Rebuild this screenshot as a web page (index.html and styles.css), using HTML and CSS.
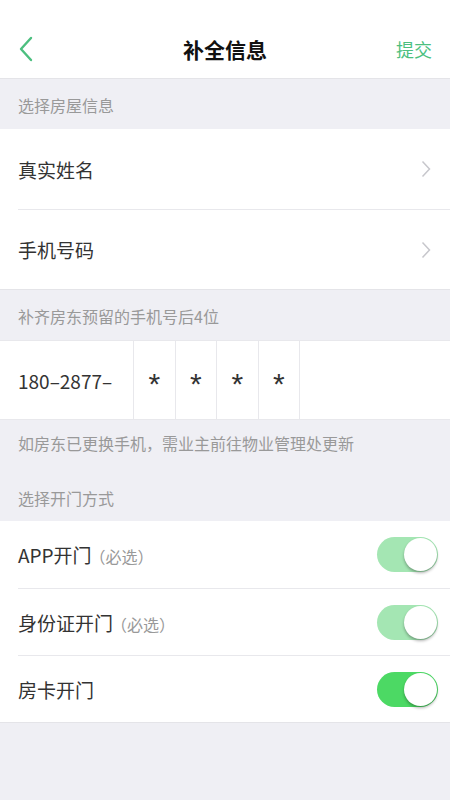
FILE: index.html
```html
<!DOCTYPE html>
<html lang="zh-CN">
<head>
    <meta charset="UTF-8">
    <meta name="viewport" content="width=device-width, initial-scale=1.0">
    <title>补全信息</title>
    <link rel="stylesheet" href="styles.css">
</head>
<body>
    <div class="nav">
        <div class="nav_back">
            <svg width="16" height="26" viewBox="0 0 16 26">
                <path d="M13 2 L3 13 L13 24" fill="none" stroke="#4cbf7f" stroke-width="2.4" stroke-linecap="round" stroke-linejoin="round"/>
            </svg>
        </div>
        <div class="nav_title">补全信息</div>
        <div class="nav_submit">提交</div>
    </div>

    <div class="section_title">选择房屋信息</div>
    <div class="group">
        <div class="cell">
            <span class="cell_label">真实姓名</span>
            <svg class="arrow" width="10" height="18" viewBox="0 0 10 18">
                <path d="M1.5 1.5 L8.5 9 L1.5 16.5" fill="none" stroke="#c7c7cc" stroke-width="1.5"/>
            </svg>
        </div>
        <div class="cell">
            <span class="cell_label">手机号码</span>
            <svg class="arrow" width="10" height="18" viewBox="0 0 10 18">
                <path d="M1.5 1.5 L8.5 9 L1.5 16.5" fill="none" stroke="#c7c7cc" stroke-width="1.5"/>
            </svg>
        </div>
    </div>

    <div class="section_title">补齐房东预留的手机号后4位</div>
    <div class="phone_row">
        <div class="phone_prefix">180–2877–</div>
        <div class="digit">*</div>
        <div class="digit">*</div>
        <div class="digit">*</div>
        <div class="digit">*</div>
        <div class="phone_rest"></div>
    </div>
    <div class="hint">如房东已更换手机，需业主前往物业管理处更新</div>

    <div class="section_title door">选择开门方式</div>
    <div class="group">
        <div class="cell switch_cell">
            <span class="cell_label">APP开门<span class="tag">（必选）</span></span>
            <div class="switch locked"><div class="knob"></div></div>
        </div>
        <div class="cell switch_cell">
            <span class="cell_label">身份证开门<span class="tag">（必选）</span></span>
            <div class="switch locked"><div class="knob"></div></div>
        </div>
        <div class="cell switch_cell">
            <span class="cell_label">房卡开门</span>
            <div class="switch on"><div class="knob"></div></div>
        </div>
    </div>
</body>
</html>
```

FILE: styles.css
```css
body {
    margin: 0;
    background-color: #efeff4;
    font-family: "PingFang SC", "Noto Sans CJK SC", "Noto Sans", sans-serif;
    color: #333333;
}
.nav {
    display: flex;
    align-items: center;
    justify-content: space-between;
    height: 58px;
    padding: 20px 18px 0 18px;
    background-color: #ffffff;
    border-bottom: 1px solid #e4e4e8;
}
.nav_back {
    width: 60px;
    display: flex;
    align-items: center;
}
.nav_title {
    font-size: 21px;
    font-weight: bold;
    color: #111111;
}
.nav_submit {
    width: 60px;
    text-align: right;
    font-size: 18px;
    color: #4cbf7f;
}
.section_title {
    height: 50px;
    line-height: 52px;
    padding-left: 18px;
    font-size: 16px;
    color: #999999;
}
.section_title.door {
    height: 33px;
    padding-top: 22px;
    line-height: 20px;
}
.group {
    background-color: #ffffff;
    border-bottom: 1px solid #e4e4e8;
}
.cell {
    display: flex;
    align-items: center;
    justify-content: space-between;
    height: 79px;
    margin-left: 18px;
    padding-right: 19px;
    border-top: 1px solid #e8e8ec;
}
.cell:first-child {
    border-top: none;
    height: 80px;
}
.cell_label {
    font-size: 19px;
    color: #333333;
}
.tag {
    font-size: 16px;
    color: #999999;
    margin-left: -2px;
}
.switch_cell {
    height: 66px;
    padding-right: 12px;
}
.switch_cell:first-child {
    height: 67px;
}
.switch {
    position: relative;
    width: 61px;
    height: 35px;
    border-radius: 18px;
    background-color: #a4e6b3;
}
.switch.on {
    background-color: #4cd964;
}
.knob {
    position: absolute;
    top: 1px;
    right: 1px;
    width: 33px;
    height: 33px;
    border-radius: 50%;
    background-color: #ffffff;
    box-shadow: 0 2px 3px rgba(0, 0, 0, 0.3);
}
.phone_row {
    display: flex;
    height: 78px;
    background-color: #ffffff;
    border-top: 1px solid #e8e8ec;
    border-bottom: 1px solid #e8e8ec;
}
.phone_prefix {
    width: 115px;
    padding-left: 18px;
    display: flex;
    align-items: center;
    font-size: 19px;
    color: #333333;
    border-right: 1px solid #e8e8ec;
}
.digit {
    width: 41.5px;
    display: flex;
    align-items: center;
    justify-content: center;
    padding-top: 8px;
    font-family: "Liberation Sans", sans-serif;
    font-size: 30px;
    box-sizing: border-box;
    color: #333333;
    border-right: 1px solid #e8e8ec;
}
.phone_rest {
    flex: 1;
}
.hint {
    height: 46px;
    line-height: 46px;
    padding-left: 18px;
    font-size: 16px;
    color: #999999;
}
```
